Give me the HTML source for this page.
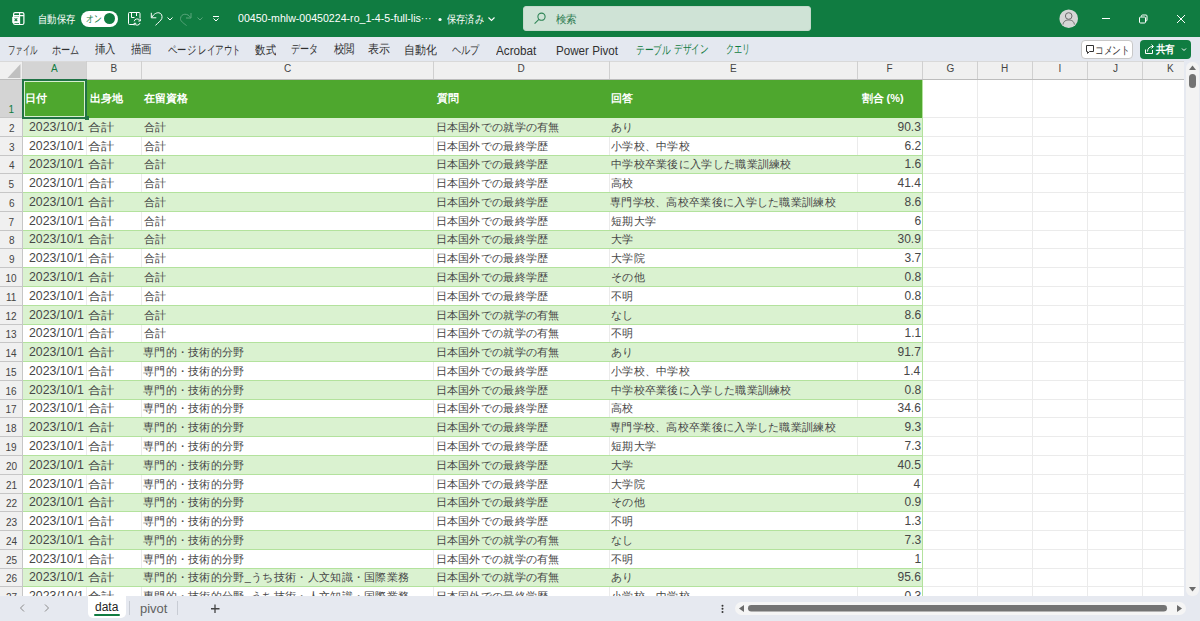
<!DOCTYPE html><html><head><meta charset="utf-8"><style>
*{margin:0;padding:0;box-sizing:border-box}
html,body{width:1200px;height:621px;overflow:hidden;background:#fff;font-family:"Liberation Sans",sans-serif}
div,svg{position:absolute}
.t{white-space:nowrap;line-height:20px;transform-origin:0 0}
</style></head><body>
<div style="left:0px;top:0px;width:1200px;height:37px;background:#107c41;"></div>
<div style="left:523px;top:6px;width:288px;height:25px;background:#cfe3d6;border-radius:3px;border:1px solid #c3d9cb"></div>
<div style="left:81px;top:10.5px;width:37px;height:16px;background:#fff;border-radius:8px"></div>
<div style="left:104px;top:12.8px;width:11.4px;height:11.4px;background:#107c41;border-radius:50%"></div>
<div style="left:0px;top:37px;width:1200px;height:24px;background:#e4e8f0;"></div>
<div style="left:1081px;top:40px;width:52px;height:19px;background:#fff;border:1px solid #c8c8c8;border-radius:4px"></div>
<div style="left:1140px;top:40px;width:51px;height:19px;background:#107c41;border-radius:4px"></div>
<div style="left:0px;top:61px;width:1184px;height:535px;background:#fff;"></div>
<div style="left:0px;top:61px;width:1184px;height:18px;background:#f0f0f0;"></div>
<div style="left:0px;top:79px;width:1184px;height:1px;background:#bdbdbd;"></div>
<div style="left:22px;top:61px;width:65px;height:18px;background:#d4d4d4;"></div>
<div style="left:0px;top:61px;width:1184px;height:1px;background:#d9d9d9;"></div>
<svg style="left:0;top:61px" width="22" height="18"><polygon points="20.5,3 20.5,17 7.5,17" fill="#c0c0c0"/></svg>
<div style="left:86px;top:61px;width:1px;height:18px;background:#d0d0d0;"></div>
<div style="left:141px;top:61px;width:1px;height:18px;background:#d0d0d0;"></div>
<div style="left:433px;top:61px;width:1px;height:18px;background:#d0d0d0;"></div>
<div style="left:609px;top:61px;width:1px;height:18px;background:#d0d0d0;"></div>
<div style="left:857px;top:61px;width:1px;height:18px;background:#d0d0d0;"></div>
<div style="left:922px;top:61px;width:1px;height:18px;background:#d0d0d0;"></div>
<div style="left:977px;top:61px;width:1px;height:18px;background:#d0d0d0;"></div>
<div style="left:1032px;top:61px;width:1px;height:18px;background:#d0d0d0;"></div>
<div style="left:1087px;top:61px;width:1px;height:18px;background:#d0d0d0;"></div>
<div style="left:1142px;top:61px;width:1px;height:18px;background:#d0d0d0;"></div>
<div style="left:22px;top:61px;width:1px;height:18px;background:#d0d0d0;"></div>
<div style="left:0px;top:80px;width:22px;height:516px;background:#f0f0f0;"></div>
<div style="left:22px;top:80px;width:1px;height:516px;background:#c6c6c6;"></div>
<div style="left:0px;top:80px;width:22px;height:37px;background:#d4d4d4;"></div>
<div style="left:0px;top:117px;width:22px;height:1px;background:#c6c6c6;"></div>
<div style="left:0px;top:136px;width:22px;height:1px;background:#c6c6c6;"></div>
<div style="left:0px;top:155px;width:22px;height:1px;background:#c6c6c6;"></div>
<div style="left:0px;top:173px;width:22px;height:1px;background:#c6c6c6;"></div>
<div style="left:0px;top:192px;width:22px;height:1px;background:#c6c6c6;"></div>
<div style="left:0px;top:211px;width:22px;height:1px;background:#c6c6c6;"></div>
<div style="left:0px;top:230px;width:22px;height:1px;background:#c6c6c6;"></div>
<div style="left:0px;top:248px;width:22px;height:1px;background:#c6c6c6;"></div>
<div style="left:0px;top:267px;width:22px;height:1px;background:#c6c6c6;"></div>
<div style="left:0px;top:286px;width:22px;height:1px;background:#c6c6c6;"></div>
<div style="left:0px;top:305px;width:22px;height:1px;background:#c6c6c6;"></div>
<div style="left:0px;top:324px;width:22px;height:1px;background:#c6c6c6;"></div>
<div style="left:0px;top:342px;width:22px;height:1px;background:#c6c6c6;"></div>
<div style="left:0px;top:361px;width:22px;height:1px;background:#c6c6c6;"></div>
<div style="left:0px;top:380px;width:22px;height:1px;background:#c6c6c6;"></div>
<div style="left:0px;top:399px;width:22px;height:1px;background:#c6c6c6;"></div>
<div style="left:0px;top:417px;width:22px;height:1px;background:#c6c6c6;"></div>
<div style="left:0px;top:436px;width:22px;height:1px;background:#c6c6c6;"></div>
<div style="left:0px;top:455px;width:22px;height:1px;background:#c6c6c6;"></div>
<div style="left:0px;top:474px;width:22px;height:1px;background:#c6c6c6;"></div>
<div style="left:0px;top:493px;width:22px;height:1px;background:#c6c6c6;"></div>
<div style="left:0px;top:511px;width:22px;height:1px;background:#c6c6c6;"></div>
<div style="left:0px;top:530px;width:22px;height:1px;background:#c6c6c6;"></div>
<div style="left:0px;top:549px;width:22px;height:1px;background:#c6c6c6;"></div>
<div style="left:0px;top:568px;width:22px;height:1px;background:#c6c6c6;"></div>
<div style="left:0px;top:586px;width:22px;height:1px;background:#c6c6c6;"></div>
<div style="left:0px;top:605px;width:22px;height:1px;background:#c6c6c6;"></div>
<div style="left:0px;top:624px;width:22px;height:1px;background:#c6c6c6;"></div>
<div style="left:923px;top:117px;width:261px;height:1px;background:#ebebeb;"></div>
<div style="left:923px;top:136px;width:261px;height:1px;background:#ebebeb;"></div>
<div style="left:923px;top:155px;width:261px;height:1px;background:#ebebeb;"></div>
<div style="left:923px;top:173px;width:261px;height:1px;background:#ebebeb;"></div>
<div style="left:923px;top:192px;width:261px;height:1px;background:#ebebeb;"></div>
<div style="left:923px;top:211px;width:261px;height:1px;background:#ebebeb;"></div>
<div style="left:923px;top:230px;width:261px;height:1px;background:#ebebeb;"></div>
<div style="left:923px;top:248px;width:261px;height:1px;background:#ebebeb;"></div>
<div style="left:923px;top:267px;width:261px;height:1px;background:#ebebeb;"></div>
<div style="left:923px;top:286px;width:261px;height:1px;background:#ebebeb;"></div>
<div style="left:923px;top:305px;width:261px;height:1px;background:#ebebeb;"></div>
<div style="left:923px;top:324px;width:261px;height:1px;background:#ebebeb;"></div>
<div style="left:923px;top:342px;width:261px;height:1px;background:#ebebeb;"></div>
<div style="left:923px;top:361px;width:261px;height:1px;background:#ebebeb;"></div>
<div style="left:923px;top:380px;width:261px;height:1px;background:#ebebeb;"></div>
<div style="left:923px;top:399px;width:261px;height:1px;background:#ebebeb;"></div>
<div style="left:923px;top:417px;width:261px;height:1px;background:#ebebeb;"></div>
<div style="left:923px;top:436px;width:261px;height:1px;background:#ebebeb;"></div>
<div style="left:923px;top:455px;width:261px;height:1px;background:#ebebeb;"></div>
<div style="left:923px;top:474px;width:261px;height:1px;background:#ebebeb;"></div>
<div style="left:923px;top:493px;width:261px;height:1px;background:#ebebeb;"></div>
<div style="left:923px;top:511px;width:261px;height:1px;background:#ebebeb;"></div>
<div style="left:923px;top:530px;width:261px;height:1px;background:#ebebeb;"></div>
<div style="left:923px;top:549px;width:261px;height:1px;background:#ebebeb;"></div>
<div style="left:923px;top:568px;width:261px;height:1px;background:#ebebeb;"></div>
<div style="left:923px;top:586px;width:261px;height:1px;background:#ebebeb;"></div>
<div style="left:923px;top:605px;width:261px;height:1px;background:#ebebeb;"></div>
<div style="left:923px;top:624px;width:261px;height:1px;background:#ebebeb;"></div>
<div style="left:922px;top:80px;width:1px;height:516px;background:#ebebeb;"></div>
<div style="left:977px;top:80px;width:1px;height:516px;background:#ebebeb;"></div>
<div style="left:1032px;top:80px;width:1px;height:516px;background:#ebebeb;"></div>
<div style="left:1087px;top:80px;width:1px;height:516px;background:#ebebeb;"></div>
<div style="left:1142px;top:80px;width:1px;height:516px;background:#ebebeb;"></div>
<div style="left:23px;top:80px;width:899px;height:38px;background:#4ea72e;"></div>
<div style="left:23px;top:118px;width:899px;height:18px;background:#daf2d0;"></div>
<div style="left:23px;top:136px;width:899px;height:1px;background:#b3e29d;"></div>
<div style="left:86px;top:137px;width:1px;height:18px;background:#ebebeb;"></div>
<div style="left:141px;top:137px;width:1px;height:18px;background:#ebebeb;"></div>
<div style="left:433px;top:137px;width:1px;height:18px;background:#ebebeb;"></div>
<div style="left:609px;top:137px;width:1px;height:18px;background:#ebebeb;"></div>
<div style="left:857px;top:137px;width:1px;height:18px;background:#ebebeb;"></div>
<div style="left:23px;top:155px;width:899px;height:1px;background:#b3e29d;"></div>
<div style="left:23px;top:156px;width:899px;height:17px;background:#daf2d0;"></div>
<div style="left:23px;top:173px;width:899px;height:1px;background:#b3e29d;"></div>
<div style="left:86px;top:174px;width:1px;height:18px;background:#ebebeb;"></div>
<div style="left:141px;top:174px;width:1px;height:18px;background:#ebebeb;"></div>
<div style="left:433px;top:174px;width:1px;height:18px;background:#ebebeb;"></div>
<div style="left:609px;top:174px;width:1px;height:18px;background:#ebebeb;"></div>
<div style="left:857px;top:174px;width:1px;height:18px;background:#ebebeb;"></div>
<div style="left:23px;top:192px;width:899px;height:1px;background:#b3e29d;"></div>
<div style="left:23px;top:193px;width:899px;height:18px;background:#daf2d0;"></div>
<div style="left:23px;top:211px;width:899px;height:1px;background:#b3e29d;"></div>
<div style="left:86px;top:212px;width:1px;height:18px;background:#ebebeb;"></div>
<div style="left:141px;top:212px;width:1px;height:18px;background:#ebebeb;"></div>
<div style="left:433px;top:212px;width:1px;height:18px;background:#ebebeb;"></div>
<div style="left:609px;top:212px;width:1px;height:18px;background:#ebebeb;"></div>
<div style="left:857px;top:212px;width:1px;height:18px;background:#ebebeb;"></div>
<div style="left:23px;top:230px;width:899px;height:1px;background:#b3e29d;"></div>
<div style="left:23px;top:231px;width:899px;height:17px;background:#daf2d0;"></div>
<div style="left:23px;top:248px;width:899px;height:1px;background:#b3e29d;"></div>
<div style="left:86px;top:249px;width:1px;height:18px;background:#ebebeb;"></div>
<div style="left:141px;top:249px;width:1px;height:18px;background:#ebebeb;"></div>
<div style="left:433px;top:249px;width:1px;height:18px;background:#ebebeb;"></div>
<div style="left:609px;top:249px;width:1px;height:18px;background:#ebebeb;"></div>
<div style="left:857px;top:249px;width:1px;height:18px;background:#ebebeb;"></div>
<div style="left:23px;top:267px;width:899px;height:1px;background:#b3e29d;"></div>
<div style="left:23px;top:268px;width:899px;height:18px;background:#daf2d0;"></div>
<div style="left:23px;top:286px;width:899px;height:1px;background:#b3e29d;"></div>
<div style="left:86px;top:287px;width:1px;height:18px;background:#ebebeb;"></div>
<div style="left:141px;top:287px;width:1px;height:18px;background:#ebebeb;"></div>
<div style="left:433px;top:287px;width:1px;height:18px;background:#ebebeb;"></div>
<div style="left:609px;top:287px;width:1px;height:18px;background:#ebebeb;"></div>
<div style="left:857px;top:287px;width:1px;height:18px;background:#ebebeb;"></div>
<div style="left:23px;top:305px;width:899px;height:1px;background:#b3e29d;"></div>
<div style="left:23px;top:306px;width:899px;height:18px;background:#daf2d0;"></div>
<div style="left:23px;top:324px;width:899px;height:1px;background:#b3e29d;"></div>
<div style="left:86px;top:325px;width:1px;height:17px;background:#ebebeb;"></div>
<div style="left:141px;top:325px;width:1px;height:17px;background:#ebebeb;"></div>
<div style="left:433px;top:325px;width:1px;height:17px;background:#ebebeb;"></div>
<div style="left:609px;top:325px;width:1px;height:17px;background:#ebebeb;"></div>
<div style="left:857px;top:325px;width:1px;height:17px;background:#ebebeb;"></div>
<div style="left:23px;top:342px;width:899px;height:1px;background:#b3e29d;"></div>
<div style="left:23px;top:343px;width:899px;height:18px;background:#daf2d0;"></div>
<div style="left:23px;top:361px;width:899px;height:1px;background:#b3e29d;"></div>
<div style="left:86px;top:362px;width:1px;height:18px;background:#ebebeb;"></div>
<div style="left:141px;top:362px;width:1px;height:18px;background:#ebebeb;"></div>
<div style="left:433px;top:362px;width:1px;height:18px;background:#ebebeb;"></div>
<div style="left:609px;top:362px;width:1px;height:18px;background:#ebebeb;"></div>
<div style="left:857px;top:362px;width:1px;height:18px;background:#ebebeb;"></div>
<div style="left:23px;top:380px;width:899px;height:1px;background:#b3e29d;"></div>
<div style="left:23px;top:381px;width:899px;height:18px;background:#daf2d0;"></div>
<div style="left:23px;top:399px;width:899px;height:1px;background:#b3e29d;"></div>
<div style="left:86px;top:400px;width:1px;height:17px;background:#ebebeb;"></div>
<div style="left:141px;top:400px;width:1px;height:17px;background:#ebebeb;"></div>
<div style="left:433px;top:400px;width:1px;height:17px;background:#ebebeb;"></div>
<div style="left:609px;top:400px;width:1px;height:17px;background:#ebebeb;"></div>
<div style="left:857px;top:400px;width:1px;height:17px;background:#ebebeb;"></div>
<div style="left:23px;top:417px;width:899px;height:1px;background:#b3e29d;"></div>
<div style="left:23px;top:418px;width:899px;height:18px;background:#daf2d0;"></div>
<div style="left:23px;top:436px;width:899px;height:1px;background:#b3e29d;"></div>
<div style="left:86px;top:437px;width:1px;height:18px;background:#ebebeb;"></div>
<div style="left:141px;top:437px;width:1px;height:18px;background:#ebebeb;"></div>
<div style="left:433px;top:437px;width:1px;height:18px;background:#ebebeb;"></div>
<div style="left:609px;top:437px;width:1px;height:18px;background:#ebebeb;"></div>
<div style="left:857px;top:437px;width:1px;height:18px;background:#ebebeb;"></div>
<div style="left:23px;top:455px;width:899px;height:1px;background:#b3e29d;"></div>
<div style="left:23px;top:456px;width:899px;height:18px;background:#daf2d0;"></div>
<div style="left:23px;top:474px;width:899px;height:1px;background:#b3e29d;"></div>
<div style="left:86px;top:475px;width:1px;height:18px;background:#ebebeb;"></div>
<div style="left:141px;top:475px;width:1px;height:18px;background:#ebebeb;"></div>
<div style="left:433px;top:475px;width:1px;height:18px;background:#ebebeb;"></div>
<div style="left:609px;top:475px;width:1px;height:18px;background:#ebebeb;"></div>
<div style="left:857px;top:475px;width:1px;height:18px;background:#ebebeb;"></div>
<div style="left:23px;top:493px;width:899px;height:1px;background:#b3e29d;"></div>
<div style="left:23px;top:494px;width:899px;height:17px;background:#daf2d0;"></div>
<div style="left:23px;top:511px;width:899px;height:1px;background:#b3e29d;"></div>
<div style="left:86px;top:512px;width:1px;height:18px;background:#ebebeb;"></div>
<div style="left:141px;top:512px;width:1px;height:18px;background:#ebebeb;"></div>
<div style="left:433px;top:512px;width:1px;height:18px;background:#ebebeb;"></div>
<div style="left:609px;top:512px;width:1px;height:18px;background:#ebebeb;"></div>
<div style="left:857px;top:512px;width:1px;height:18px;background:#ebebeb;"></div>
<div style="left:23px;top:530px;width:899px;height:1px;background:#b3e29d;"></div>
<div style="left:23px;top:531px;width:899px;height:18px;background:#daf2d0;"></div>
<div style="left:23px;top:549px;width:899px;height:1px;background:#b3e29d;"></div>
<div style="left:86px;top:550px;width:1px;height:18px;background:#ebebeb;"></div>
<div style="left:141px;top:550px;width:1px;height:18px;background:#ebebeb;"></div>
<div style="left:433px;top:550px;width:1px;height:18px;background:#ebebeb;"></div>
<div style="left:609px;top:550px;width:1px;height:18px;background:#ebebeb;"></div>
<div style="left:857px;top:550px;width:1px;height:18px;background:#ebebeb;"></div>
<div style="left:23px;top:568px;width:899px;height:1px;background:#b3e29d;"></div>
<div style="left:23px;top:569px;width:899px;height:17px;background:#daf2d0;"></div>
<div style="left:23px;top:586px;width:899px;height:1px;background:#b3e29d;"></div>
<div style="left:86px;top:587px;width:1px;height:18px;background:#ebebeb;"></div>
<div style="left:141px;top:587px;width:1px;height:18px;background:#ebebeb;"></div>
<div style="left:433px;top:587px;width:1px;height:18px;background:#ebebeb;"></div>
<div style="left:609px;top:587px;width:1px;height:18px;background:#ebebeb;"></div>
<div style="left:857px;top:587px;width:1px;height:18px;background:#ebebeb;"></div>
<div style="left:23px;top:605px;width:899px;height:1px;background:#b3e29d;"></div>
<div style="left:922px;top:80px;width:1px;height:516px;background:#b3e29d;"></div>
<div style="left:22px;top:79px;width:65px;height:40px;background:transparent;border:2px solid #217346"></div>
<div style="left:24px;top:81px;width:61px;height:36px;background:transparent;border:1px solid #d8efcf"></div>
<div style="left:85px;top:116px;width:4px;height:4px;background:#217346;"></div>
<svg style="left:0;top:0" width="240" height="37" fill="none" stroke="#fff" stroke-width="1"><rect x="13.6" y="12.6" width="10.3" height="11.9" rx="1.5" stroke-width="1.2"/><path d="M13.6,15.6 H23.9 M19.6,12.6 V24.5" stroke-width="1.1"/><rect x="12.2" y="16.4" width="7.4" height="6.8" rx="1.2" fill="#fff" stroke="none"/><path d="M14.6,18.3 L17.3,21.2 M17.3,18.3 L14.6,21.2" stroke="#107c41" stroke-width="1.1"/><path d="M134,24.5 H129.5 A1,1 0 0 1 128.5,23.5 V13.5 A1,1 0 0 1 129.5,12.5 H139 A1,1 0 0 1 140,13.5 V18.5"/><path d="M131.5,12.5 V17.5 H134.5 M136.5,12.5 V16"/><path d="M134.2,21.3 A3,2.6 0 0 1 140,20.6 M140.3,19 V21 H138.3 M140,23 A3,2.6 0 0 1 134.3,23.6 M134.2,25.3 V23.3 H136.2"/><path d="M151.3,12.8 V17.8 H156.3 M151.8,17.3 C154,13.5 157,12.5 159,12.8 C161.5,13.3 162.6,16 161.8,18.5 C161,20.5 158,23 155.5,25.3"/><path d="M167.5,17.5 L170,20 L172.5,17.5"/><g stroke="#5aa57c"><path d="M191,13 V18 H186 M190.5,17.5 C188,13 181,13 180.5,18.5 C180,21 184,23.5 186.5,25.5"/><path d="M197.5,17.5 L200,20 L202.5,17.5"/></g><path d="M213,16.5 H219 M213.5,18.5 L216,21 L218.5,18.5"/></svg>
<svg style="left:430px;top:0" width="80" height="37"><circle cx="10" cy="19.5" r="1.6" fill="#fff"/><path d="M58.5,17.5 L61.5,20.5 L64.5,17.5" stroke="#fff" stroke-width="1.1" fill="none"/></svg>
<svg style="left:530px;top:8px" width="20" height="20" fill="none" stroke="#2f8556" stroke-width="1.1"><circle cx="11.5" cy="8.7" r="3.6"/><path d="M8.9,11.3 L4.6,15.6"/></svg>
<svg style="left:1040px;top:0" width="160" height="37" fill="none"><circle cx="28.7" cy="18.7" r="9.3" fill="#d6d6d6"/><circle cx="28.7" cy="16" r="3.3" stroke="#6b6b6b" stroke-width="1"/><path d="M23,24.5 C23.5,21 26,20 28.7,20 C31.4,20 33.9,21 34.4,24.5" stroke="#6b6b6b" stroke-width="1"/><path d="M62,18.5 H70" stroke="#fff" stroke-width="1"/><rect x="99.5" y="17" width="6" height="6" rx="1" stroke="#fff"/><path d="M101.5,16.5 V16 A1,1 0 0 1 102.5,15 H106 A1,1 0 0 1 107,16 V20 A1,1 0 0 1 106,21" stroke="#fff"/><path d="M137,15 L145,23 M145,15 L137,23" stroke="#fff" stroke-width="1"/></svg>
<svg style="left:1081px;top:40px" width="110" height="19" fill="none"><path d="M5.5,5.5 H12.5 V11.5 H8.5 L6.5,13.5 V11.5 H5.5 Z" stroke="#333" stroke-width="1"/><path d="M64.5,9.5 V13.5 H71.5 V10 M66.5,11.5 C66.5,8 69,6.5 72,6.5 M70.5,4.5 L72.5,6.5 L70.5,8.5" stroke="#fff" stroke-width="1"/><path d="M101,8.5 L103,10.5 L105,8.5" stroke="#fff" stroke-width="1"/></svg>
<div class="t" style="left:37.65px;top:9.00px;font-size:11px;color:#fff;transform:scaleX(0.8488)">自動保存</div>
<div class="t" style="left:85.52px;top:9.00px;font-size:10px;color:#107c41;transform:scaleX(0.7778)">オン</div>
<div class="t" style="left:238.00px;top:8.00px;font-size:11px;color:#fff;transform:scaleX(0.9648)">00450-mhlw-00450224-ro_1-4-5-full-lis···</div>
<div class="t" style="left:447.00px;top:9.00px;font-size:11px;color:#fff;transform:scaleX(0.8372)">保存済み</div>
<div class="t" style="left:556.00px;top:8.50px;font-size:11px;color:#2a7a4e;transform:scaleX(0.9545)">検索</div>
<div class="t" style="left:8.38px;top:39.50px;font-size:12px;color:#303030;transform:scaleX(0.6170)">ファイル</div>
<div class="t" style="left:52.24px;top:39.50px;font-size:12px;color:#303030;transform:scaleX(0.7647)">ホーム</div>
<div class="t" style="left:95.00px;top:38.50px;font-size:12px;color:#303030;transform:scaleX(0.8696)">挿入</div>
<div class="t" style="left:131.00px;top:38.50px;font-size:12px;color:#303030;transform:scaleX(0.8696)">描画</div>
<div class="t" style="left:167.82px;top:39.50px;font-size:12px;color:#303030;transform:scaleX(0.7765)">ページ</div>
<div class="t" style="left:197.58px;top:39.50px;font-size:12px;color:#303030;transform:scaleX(0.7091)">レイアウト</div>
<div class="t" style="left:255.00px;top:39.50px;font-size:12px;color:#303030;transform:scaleX(0.8750)">数式</div>
<div class="t" style="left:291.24px;top:38.50px;font-size:12px;color:#303030;transform:scaleX(0.7576)">データ</div>
<div class="t" style="left:334.00px;top:38.50px;font-size:12px;color:#303030;transform:scaleX(0.8696)">校閲</div>
<div class="t" style="left:368.09px;top:38.50px;font-size:12px;color:#303030;transform:scaleX(0.9130)">表示</div>
<div class="t" style="left:404.18px;top:39.50px;font-size:12px;color:#303030;transform:scaleX(0.9118)">自動化</div>
<div class="t" style="left:452.24px;top:39.50px;font-size:12px;color:#303030;transform:scaleX(0.7647)">ヘルプ</div>
<div class="t" style="left:496.00px;top:41.00px;font-size:12px;color:#303030;transform:scaleX(0.9756)">Acrobat</div>
<div class="t" style="left:556.03px;top:41.00px;font-size:12px;color:#303030;transform:scaleX(0.9683)">Power Pivot</div>
<div class="t" style="left:636.28px;top:39.50px;font-size:12px;color:#107c41;transform:scaleX(0.7234)">テーブル</div>
<div class="t" style="left:674.28px;top:38.50px;font-size:12px;color:#107c41;transform:scaleX(0.7174)">デザイン</div>
<div class="t" style="left:725.65px;top:38.50px;font-size:12px;color:#107c41;transform:scaleX(0.6774)">クエリ</div>
<div class="t" style="left:1095.41px;top:39.50px;font-size:11px;color:#333;transform:scaleX(0.7949)">コメント</div>
<div class="t" style="left:1156.00px;top:39.00px;font-size:11px;color:#fff;font-weight:bold;transform:scaleX(0.8636)">共有</div>
<div class="t" style="left:51.00px;top:59.00px;font-size:10px;color:#107c41">A</div>
<div class="t" style="left:110.50px;top:59.00px;font-size:10px;color:#444">B</div>
<div class="t" style="left:284.00px;top:59.00px;font-size:10px;color:#444">C</div>
<div class="t" style="left:517.50px;top:59.00px;font-size:10px;color:#444">D</div>
<div class="t" style="left:730.00px;top:59.00px;font-size:10px;color:#444">E</div>
<div class="t" style="left:886.50px;top:59.00px;font-size:10px;color:#444">F</div>
<div class="t" style="left:946.50px;top:59.00px;font-size:10px;color:#444">G</div>
<div class="t" style="left:1001.00px;top:59.00px;font-size:10px;color:#444">H</div>
<div class="t" style="left:1058.50px;top:59.00px;font-size:10px;color:#444">I</div>
<div class="t" style="left:1113.00px;top:59.00px;font-size:10px;color:#444">J</div>
<div class="t" style="left:1167.00px;top:59.00px;font-size:10px;color:#444">K</div>
<div class="t" style="left:8.50px;top:100.00px;font-size:10px;color:#107c41">1</div>
<div class="t" style="left:9.00px;top:119.00px;font-size:10px;color:#444">2</div>
<div class="t" style="left:9.00px;top:138.00px;font-size:10px;color:#444">3</div>
<div class="t" style="left:9.00px;top:156.00px;font-size:10px;color:#444">4</div>
<div class="t" style="left:8.50px;top:175.00px;font-size:10px;color:#444">5</div>
<div class="t" style="left:9.00px;top:194.00px;font-size:10px;color:#444">6</div>
<div class="t" style="left:8.50px;top:213.00px;font-size:10px;color:#444">7</div>
<div class="t" style="left:9.00px;top:231.00px;font-size:10px;color:#444">8</div>
<div class="t" style="left:9.00px;top:250.00px;font-size:10px;color:#444">9</div>
<div class="t" style="left:5.50px;top:269.00px;font-size:10px;color:#444">10</div>
<div class="t" style="left:6.00px;top:288.00px;font-size:10px;color:#444">11</div>
<div class="t" style="left:5.50px;top:307.00px;font-size:10px;color:#444">12</div>
<div class="t" style="left:5.50px;top:325.00px;font-size:10px;color:#444">13</div>
<div class="t" style="left:5.50px;top:344.00px;font-size:10px;color:#444">14</div>
<div class="t" style="left:5.50px;top:363.00px;font-size:10px;color:#444">15</div>
<div class="t" style="left:5.50px;top:382.00px;font-size:10px;color:#444">16</div>
<div class="t" style="left:5.50px;top:400.00px;font-size:10px;color:#444">17</div>
<div class="t" style="left:5.50px;top:419.00px;font-size:10px;color:#444">18</div>
<div class="t" style="left:5.50px;top:438.00px;font-size:10px;color:#444">19</div>
<div class="t" style="left:6.00px;top:457.00px;font-size:10px;color:#444">20</div>
<div class="t" style="left:6.00px;top:476.00px;font-size:10px;color:#444">21</div>
<div class="t" style="left:6.00px;top:494.00px;font-size:10px;color:#444">22</div>
<div class="t" style="left:6.00px;top:513.00px;font-size:10px;color:#444">23</div>
<div class="t" style="left:6.00px;top:532.00px;font-size:10px;color:#444">24</div>
<div class="t" style="left:6.00px;top:551.00px;font-size:10px;color:#444">25</div>
<div class="t" style="left:6.00px;top:569.00px;font-size:10px;color:#444">26</div>
<div class="t" style="left:6.00px;top:588.00px;font-size:10px;color:#444">27</div>
<div class="t" style="left:6.00px;top:607.00px;font-size:10px;color:#444">28</div>
<div class="t" style="left:25.00px;top:87.50px;font-size:11px;color:#fff;font-weight:bold">日付</div>
<div class="t" style="left:90.00px;top:87.50px;font-size:11px;color:#fff;font-weight:bold">出身地</div>
<div class="t" style="left:144.00px;top:87.50px;font-size:11px;color:#fff;font-weight:bold">在留資格</div>
<div class="t" style="left:437.00px;top:87.50px;font-size:11px;color:#fff;font-weight:bold">質問</div>
<div class="t" style="left:611.00px;top:87.50px;font-size:11px;color:#fff;font-weight:bold">回答</div>
<div class="t" style="left:861.50px;top:87.50px;font-size:11px;color:#fff;font-weight:bold">割合 (%)</div>
<div class="t" style="left:28.77px;top:117.00px;font-size:12px;color:#474747;transform:scaleX(1.0269)">2023/10/1</div>
<div class="t" style="left:87.81px;top:117.00px;font-size:11px;color:#474747;transform:scaleX(1.1944)">合計</div>
<div class="t" style="left:144.00px;top:117.00px;font-size:11px;color:#474747;letter-spacing:0.3px">合計</div>
<div class="t" style="left:435.50px;top:117.00px;font-size:11px;color:#474747;letter-spacing:0.3px">日本国外での就学の有無</div>
<div class="t" style="left:611.00px;top:117.00px;font-size:11px;color:#474747;letter-spacing:0.3px">あり</div>
<div class="t" style="left:897.50px;top:117.00px;font-size:12px;color:#474747">90.3</div>
<div class="t" style="left:28.77px;top:136.00px;font-size:12px;color:#474747;transform:scaleX(1.0269)">2023/10/1</div>
<div class="t" style="left:87.81px;top:136.00px;font-size:11px;color:#474747;transform:scaleX(1.1944)">合計</div>
<div class="t" style="left:144.00px;top:136.00px;font-size:11px;color:#474747;letter-spacing:0.3px">合計</div>
<div class="t" style="left:435.50px;top:136.00px;font-size:11px;color:#474747;letter-spacing:0.3px">日本国外での最終学歴</div>
<div class="t" style="left:611.00px;top:136.00px;font-size:11px;color:#474747;letter-spacing:0.3px">小学校、中学校</div>
<div class="t" style="left:904.50px;top:136.00px;font-size:12px;color:#474747">6.2</div>
<div class="t" style="left:28.77px;top:154.00px;font-size:12px;color:#474747;transform:scaleX(1.0269)">2023/10/1</div>
<div class="t" style="left:87.81px;top:154.00px;font-size:11px;color:#474747;transform:scaleX(1.1944)">合計</div>
<div class="t" style="left:144.00px;top:154.00px;font-size:11px;color:#474747;letter-spacing:0.3px">合計</div>
<div class="t" style="left:435.50px;top:154.00px;font-size:11px;color:#474747;letter-spacing:0.3px">日本国外での最終学歴</div>
<div class="t" style="left:611.00px;top:154.00px;font-size:11px;color:#474747;letter-spacing:0.3px">中学校卒業後に入学した職業訓練校</div>
<div class="t" style="left:904.50px;top:154.00px;font-size:12px;color:#474747">1.6</div>
<div class="t" style="left:28.77px;top:173.00px;font-size:12px;color:#474747;transform:scaleX(1.0269)">2023/10/1</div>
<div class="t" style="left:87.81px;top:173.00px;font-size:11px;color:#474747;transform:scaleX(1.1944)">合計</div>
<div class="t" style="left:144.00px;top:173.00px;font-size:11px;color:#474747;letter-spacing:0.3px">合計</div>
<div class="t" style="left:435.50px;top:173.00px;font-size:11px;color:#474747;letter-spacing:0.3px">日本国外での最終学歴</div>
<div class="t" style="left:611.00px;top:173.00px;font-size:11px;color:#474747;letter-spacing:0.3px">高校</div>
<div class="t" style="left:897.50px;top:173.00px;font-size:12px;color:#474747">41.4</div>
<div class="t" style="left:28.77px;top:192.00px;font-size:12px;color:#474747;transform:scaleX(1.0269)">2023/10/1</div>
<div class="t" style="left:87.81px;top:192.00px;font-size:11px;color:#474747;transform:scaleX(1.1944)">合計</div>
<div class="t" style="left:144.00px;top:192.00px;font-size:11px;color:#474747;letter-spacing:0.3px">合計</div>
<div class="t" style="left:435.50px;top:192.00px;font-size:11px;color:#474747;letter-spacing:0.3px">日本国外での最終学歴</div>
<div class="t" style="left:610.00px;top:192.00px;font-size:11px;color:#474747;letter-spacing:0.3px">専門学校、高校卒業後に入学した職業訓練校</div>
<div class="t" style="left:904.50px;top:192.00px;font-size:12px;color:#474747">8.6</div>
<div class="t" style="left:28.77px;top:211.00px;font-size:12px;color:#474747;transform:scaleX(1.0269)">2023/10/1</div>
<div class="t" style="left:87.81px;top:211.00px;font-size:11px;color:#474747;transform:scaleX(1.1944)">合計</div>
<div class="t" style="left:144.00px;top:211.00px;font-size:11px;color:#474747;letter-spacing:0.3px">合計</div>
<div class="t" style="left:435.50px;top:211.00px;font-size:11px;color:#474747;letter-spacing:0.3px">日本国外での最終学歴</div>
<div class="t" style="left:611.00px;top:211.00px;font-size:11px;color:#474747;letter-spacing:0.3px">短期大学</div>
<div class="t" style="left:914.50px;top:211.00px;font-size:12px;color:#474747">6</div>
<div class="t" style="left:28.77px;top:229.00px;font-size:12px;color:#474747;transform:scaleX(1.0269)">2023/10/1</div>
<div class="t" style="left:87.81px;top:229.00px;font-size:11px;color:#474747;transform:scaleX(1.1944)">合計</div>
<div class="t" style="left:144.00px;top:229.00px;font-size:11px;color:#474747;letter-spacing:0.3px">合計</div>
<div class="t" style="left:435.50px;top:229.00px;font-size:11px;color:#474747;letter-spacing:0.3px">日本国外での最終学歴</div>
<div class="t" style="left:611.00px;top:229.00px;font-size:11px;color:#474747;letter-spacing:0.3px">大学</div>
<div class="t" style="left:897.50px;top:229.00px;font-size:12px;color:#474747">30.9</div>
<div class="t" style="left:28.77px;top:248.00px;font-size:12px;color:#474747;transform:scaleX(1.0269)">2023/10/1</div>
<div class="t" style="left:87.81px;top:248.00px;font-size:11px;color:#474747;transform:scaleX(1.1944)">合計</div>
<div class="t" style="left:144.00px;top:248.00px;font-size:11px;color:#474747;letter-spacing:0.3px">合計</div>
<div class="t" style="left:435.50px;top:248.00px;font-size:11px;color:#474747;letter-spacing:0.3px">日本国外での最終学歴</div>
<div class="t" style="left:611.00px;top:248.00px;font-size:11px;color:#474747;letter-spacing:0.3px">大学院</div>
<div class="t" style="left:904.50px;top:248.00px;font-size:12px;color:#474747">3.7</div>
<div class="t" style="left:28.77px;top:267.00px;font-size:12px;color:#474747;transform:scaleX(1.0269)">2023/10/1</div>
<div class="t" style="left:87.81px;top:267.00px;font-size:11px;color:#474747;transform:scaleX(1.1944)">合計</div>
<div class="t" style="left:144.00px;top:267.00px;font-size:11px;color:#474747;letter-spacing:0.3px">合計</div>
<div class="t" style="left:435.50px;top:267.00px;font-size:11px;color:#474747;letter-spacing:0.3px">日本国外での最終学歴</div>
<div class="t" style="left:611.00px;top:267.00px;font-size:11px;color:#474747;letter-spacing:0.3px">その他</div>
<div class="t" style="left:904.50px;top:267.00px;font-size:12px;color:#474747">0.8</div>
<div class="t" style="left:28.77px;top:286.00px;font-size:12px;color:#474747;transform:scaleX(1.0269)">2023/10/1</div>
<div class="t" style="left:87.81px;top:286.00px;font-size:11px;color:#474747;transform:scaleX(1.1944)">合計</div>
<div class="t" style="left:144.00px;top:286.00px;font-size:11px;color:#474747;letter-spacing:0.3px">合計</div>
<div class="t" style="left:435.50px;top:286.00px;font-size:11px;color:#474747;letter-spacing:0.3px">日本国外での最終学歴</div>
<div class="t" style="left:611.00px;top:286.00px;font-size:11px;color:#474747;letter-spacing:0.3px">不明</div>
<div class="t" style="left:904.50px;top:286.00px;font-size:12px;color:#474747">0.8</div>
<div class="t" style="left:28.77px;top:305.00px;font-size:12px;color:#474747;transform:scaleX(1.0269)">2023/10/1</div>
<div class="t" style="left:87.81px;top:305.00px;font-size:11px;color:#474747;transform:scaleX(1.1944)">合計</div>
<div class="t" style="left:144.00px;top:305.00px;font-size:11px;color:#474747;letter-spacing:0.3px">合計</div>
<div class="t" style="left:435.50px;top:305.00px;font-size:11px;color:#474747;letter-spacing:0.3px">日本国外での就学の有無</div>
<div class="t" style="left:611.00px;top:305.00px;font-size:11px;color:#474747;letter-spacing:0.3px">なし</div>
<div class="t" style="left:904.50px;top:305.00px;font-size:12px;color:#474747">8.6</div>
<div class="t" style="left:28.77px;top:323.00px;font-size:12px;color:#474747;transform:scaleX(1.0269)">2023/10/1</div>
<div class="t" style="left:87.81px;top:323.00px;font-size:11px;color:#474747;transform:scaleX(1.1944)">合計</div>
<div class="t" style="left:144.00px;top:323.00px;font-size:11px;color:#474747;letter-spacing:0.3px">合計</div>
<div class="t" style="left:435.50px;top:323.00px;font-size:11px;color:#474747;letter-spacing:0.3px">日本国外での就学の有無</div>
<div class="t" style="left:611.00px;top:323.00px;font-size:11px;color:#474747;letter-spacing:0.3px">不明</div>
<div class="t" style="left:904.50px;top:323.00px;font-size:12px;color:#474747">1.1</div>
<div class="t" style="left:28.77px;top:342.00px;font-size:12px;color:#474747;transform:scaleX(1.0269)">2023/10/1</div>
<div class="t" style="left:87.81px;top:342.00px;font-size:11px;color:#474747;transform:scaleX(1.1944)">合計</div>
<div class="t" style="left:143.00px;top:342.00px;font-size:11px;color:#474747;letter-spacing:0.3px">専門的・技術的分野</div>
<div class="t" style="left:435.50px;top:342.00px;font-size:11px;color:#474747;letter-spacing:0.3px">日本国外での就学の有無</div>
<div class="t" style="left:611.00px;top:342.00px;font-size:11px;color:#474747;letter-spacing:0.3px">あり</div>
<div class="t" style="left:897.50px;top:342.00px;font-size:12px;color:#474747">91.7</div>
<div class="t" style="left:28.77px;top:361.00px;font-size:12px;color:#474747;transform:scaleX(1.0269)">2023/10/1</div>
<div class="t" style="left:87.81px;top:361.00px;font-size:11px;color:#474747;transform:scaleX(1.1944)">合計</div>
<div class="t" style="left:143.00px;top:361.00px;font-size:11px;color:#474747;letter-spacing:0.3px">専門的・技術的分野</div>
<div class="t" style="left:435.50px;top:361.00px;font-size:11px;color:#474747;letter-spacing:0.3px">日本国外での最終学歴</div>
<div class="t" style="left:611.00px;top:361.00px;font-size:11px;color:#474747;letter-spacing:0.3px">小学校、中学校</div>
<div class="t" style="left:903.50px;top:361.00px;font-size:12px;color:#474747">1.4</div>
<div class="t" style="left:28.77px;top:380.00px;font-size:12px;color:#474747;transform:scaleX(1.0269)">2023/10/1</div>
<div class="t" style="left:87.81px;top:380.00px;font-size:11px;color:#474747;transform:scaleX(1.1944)">合計</div>
<div class="t" style="left:143.00px;top:380.00px;font-size:11px;color:#474747;letter-spacing:0.3px">専門的・技術的分野</div>
<div class="t" style="left:435.50px;top:380.00px;font-size:11px;color:#474747;letter-spacing:0.3px">日本国外での最終学歴</div>
<div class="t" style="left:611.00px;top:380.00px;font-size:11px;color:#474747;letter-spacing:0.3px">中学校卒業後に入学した職業訓練校</div>
<div class="t" style="left:904.50px;top:380.00px;font-size:12px;color:#474747">0.8</div>
<div class="t" style="left:28.77px;top:398.00px;font-size:12px;color:#474747;transform:scaleX(1.0269)">2023/10/1</div>
<div class="t" style="left:87.81px;top:398.00px;font-size:11px;color:#474747;transform:scaleX(1.1944)">合計</div>
<div class="t" style="left:143.00px;top:398.00px;font-size:11px;color:#474747;letter-spacing:0.3px">専門的・技術的分野</div>
<div class="t" style="left:435.50px;top:398.00px;font-size:11px;color:#474747;letter-spacing:0.3px">日本国外での最終学歴</div>
<div class="t" style="left:611.00px;top:398.00px;font-size:11px;color:#474747;letter-spacing:0.3px">高校</div>
<div class="t" style="left:897.50px;top:398.00px;font-size:12px;color:#474747">34.6</div>
<div class="t" style="left:28.77px;top:417.00px;font-size:12px;color:#474747;transform:scaleX(1.0269)">2023/10/1</div>
<div class="t" style="left:87.81px;top:417.00px;font-size:11px;color:#474747;transform:scaleX(1.1944)">合計</div>
<div class="t" style="left:143.00px;top:417.00px;font-size:11px;color:#474747;letter-spacing:0.3px">専門的・技術的分野</div>
<div class="t" style="left:435.50px;top:417.00px;font-size:11px;color:#474747;letter-spacing:0.3px">日本国外での最終学歴</div>
<div class="t" style="left:610.00px;top:417.00px;font-size:11px;color:#474747;letter-spacing:0.3px">専門学校、高校卒業後に入学した職業訓練校</div>
<div class="t" style="left:904.50px;top:417.00px;font-size:12px;color:#474747">9.3</div>
<div class="t" style="left:28.77px;top:436.00px;font-size:12px;color:#474747;transform:scaleX(1.0269)">2023/10/1</div>
<div class="t" style="left:87.81px;top:436.00px;font-size:11px;color:#474747;transform:scaleX(1.1944)">合計</div>
<div class="t" style="left:143.00px;top:436.00px;font-size:11px;color:#474747;letter-spacing:0.3px">専門的・技術的分野</div>
<div class="t" style="left:435.50px;top:436.00px;font-size:11px;color:#474747;letter-spacing:0.3px">日本国外での最終学歴</div>
<div class="t" style="left:611.00px;top:436.00px;font-size:11px;color:#474747;letter-spacing:0.3px">短期大学</div>
<div class="t" style="left:904.50px;top:436.00px;font-size:12px;color:#474747">7.3</div>
<div class="t" style="left:28.77px;top:455.00px;font-size:12px;color:#474747;transform:scaleX(1.0269)">2023/10/1</div>
<div class="t" style="left:87.81px;top:455.00px;font-size:11px;color:#474747;transform:scaleX(1.1944)">合計</div>
<div class="t" style="left:143.00px;top:455.00px;font-size:11px;color:#474747;letter-spacing:0.3px">専門的・技術的分野</div>
<div class="t" style="left:435.50px;top:455.00px;font-size:11px;color:#474747;letter-spacing:0.3px">日本国外での最終学歴</div>
<div class="t" style="left:611.00px;top:455.00px;font-size:11px;color:#474747;letter-spacing:0.3px">大学</div>
<div class="t" style="left:897.50px;top:455.00px;font-size:12px;color:#474747">40.5</div>
<div class="t" style="left:28.77px;top:474.00px;font-size:12px;color:#474747;transform:scaleX(1.0269)">2023/10/1</div>
<div class="t" style="left:87.81px;top:474.00px;font-size:11px;color:#474747;transform:scaleX(1.1944)">合計</div>
<div class="t" style="left:143.00px;top:474.00px;font-size:11px;color:#474747;letter-spacing:0.3px">専門的・技術的分野</div>
<div class="t" style="left:435.50px;top:474.00px;font-size:11px;color:#474747;letter-spacing:0.3px">日本国外での最終学歴</div>
<div class="t" style="left:611.00px;top:474.00px;font-size:11px;color:#474747;letter-spacing:0.3px">大学院</div>
<div class="t" style="left:913.50px;top:474.00px;font-size:12px;color:#474747">4</div>
<div class="t" style="left:28.77px;top:492.00px;font-size:12px;color:#474747;transform:scaleX(1.0269)">2023/10/1</div>
<div class="t" style="left:87.81px;top:492.00px;font-size:11px;color:#474747;transform:scaleX(1.1944)">合計</div>
<div class="t" style="left:143.00px;top:492.00px;font-size:11px;color:#474747;letter-spacing:0.3px">専門的・技術的分野</div>
<div class="t" style="left:435.50px;top:492.00px;font-size:11px;color:#474747;letter-spacing:0.3px">日本国外での最終学歴</div>
<div class="t" style="left:611.00px;top:492.00px;font-size:11px;color:#474747;letter-spacing:0.3px">その他</div>
<div class="t" style="left:904.50px;top:492.00px;font-size:12px;color:#474747">0.9</div>
<div class="t" style="left:28.77px;top:511.00px;font-size:12px;color:#474747;transform:scaleX(1.0269)">2023/10/1</div>
<div class="t" style="left:87.81px;top:511.00px;font-size:11px;color:#474747;transform:scaleX(1.1944)">合計</div>
<div class="t" style="left:143.00px;top:511.00px;font-size:11px;color:#474747;letter-spacing:0.3px">専門的・技術的分野</div>
<div class="t" style="left:435.50px;top:511.00px;font-size:11px;color:#474747;letter-spacing:0.3px">日本国外での最終学歴</div>
<div class="t" style="left:611.00px;top:511.00px;font-size:11px;color:#474747;letter-spacing:0.3px">不明</div>
<div class="t" style="left:904.50px;top:511.00px;font-size:12px;color:#474747">1.3</div>
<div class="t" style="left:28.77px;top:530.00px;font-size:12px;color:#474747;transform:scaleX(1.0269)">2023/10/1</div>
<div class="t" style="left:87.81px;top:530.00px;font-size:11px;color:#474747;transform:scaleX(1.1944)">合計</div>
<div class="t" style="left:143.00px;top:530.00px;font-size:11px;color:#474747;letter-spacing:0.3px">専門的・技術的分野</div>
<div class="t" style="left:435.50px;top:530.00px;font-size:11px;color:#474747;letter-spacing:0.3px">日本国外での就学の有無</div>
<div class="t" style="left:611.00px;top:530.00px;font-size:11px;color:#474747;letter-spacing:0.3px">なし</div>
<div class="t" style="left:904.50px;top:530.00px;font-size:12px;color:#474747">7.3</div>
<div class="t" style="left:28.77px;top:549.00px;font-size:12px;color:#474747;transform:scaleX(1.0269)">2023/10/1</div>
<div class="t" style="left:87.81px;top:549.00px;font-size:11px;color:#474747;transform:scaleX(1.1944)">合計</div>
<div class="t" style="left:143.00px;top:549.00px;font-size:11px;color:#474747;letter-spacing:0.3px">専門的・技術的分野</div>
<div class="t" style="left:435.50px;top:549.00px;font-size:11px;color:#474747;letter-spacing:0.3px">日本国外での就学の有無</div>
<div class="t" style="left:611.00px;top:549.00px;font-size:11px;color:#474747;letter-spacing:0.3px">不明</div>
<div class="t" style="left:914.50px;top:549.00px;font-size:12px;color:#474747">1</div>
<div class="t" style="left:28.77px;top:567.00px;font-size:12px;color:#474747;transform:scaleX(1.0269)">2023/10/1</div>
<div class="t" style="left:87.81px;top:567.00px;font-size:11px;color:#474747;transform:scaleX(1.1944)">合計</div>
<div class="t" style="left:143.00px;top:567.00px;font-size:11px;color:#474747;letter-spacing:0.3px">専門的・技術的分野_うち技術・人文知識・国際業務</div>
<div class="t" style="left:435.50px;top:567.00px;font-size:11px;color:#474747;letter-spacing:0.3px">日本国外での就学の有無</div>
<div class="t" style="left:611.00px;top:567.00px;font-size:11px;color:#474747;letter-spacing:0.3px">あり</div>
<div class="t" style="left:897.50px;top:567.00px;font-size:12px;color:#474747">95.6</div>
<div class="t" style="left:28.77px;top:586.00px;font-size:12px;color:#474747;transform:scaleX(1.0269)">2023/10/1</div>
<div class="t" style="left:87.81px;top:586.00px;font-size:11px;color:#474747;transform:scaleX(1.1944)">合計</div>
<div class="t" style="left:143.00px;top:586.00px;font-size:11px;color:#474747;letter-spacing:0.3px">専門的・技術的分野_うち技術・人文知識・国際業務</div>
<div class="t" style="left:435.50px;top:586.00px;font-size:11px;color:#474747;letter-spacing:0.3px">日本国外での最終学歴</div>
<div class="t" style="left:611.00px;top:586.00px;font-size:11px;color:#474747;letter-spacing:0.3px">小学校、中学校</div>
<div class="t" style="left:904.50px;top:586.00px;font-size:12px;color:#474747">0.3</div>
<div style="left:1184px;top:61px;width:16px;height:536px;background:#e6e9f0;"></div>
<div style="left:1186px;top:62px;width:13px;height:534px;background:#f3f3f3;border-radius:6px 6px 6px 6px"></div>
<svg style="left:1186px;top:62px" width="13" height="534"><polygon points="3,8 10,8 6.5,3.5" fill="#6b6b6b"/><rect x="3" y="12" width="7" height="14" rx="3.5" fill="#737373"/><polygon points="3,525 10,525 6.5,529.5" fill="#6b6b6b"/></svg>
<div style="left:0px;top:596px;width:1200px;height:25px;background:#e6e9f0;"></div>
<div style="left:88px;top:596px;width:38px;height:22px;background:#fff;border-radius:0 0 5px 5px"></div>
<div style="left:94px;top:614px;width:26px;height:2px;background:#107c41;border-radius:1px"></div>
<div style="left:129px;top:601px;width:1px;height:14px;background:#c8ccd4;"></div>
<div style="left:177px;top:601px;width:1px;height:14px;background:#c8ccd4;"></div>
<svg style="left:0;top:596px" width="240" height="25"><path d="M24,8.5 L20.5,12 L24,15.5" stroke="#8a8a8a" stroke-width="1" fill="none"/><path d="M45,8.5 L48.5,12 L45,15.5" stroke="#8a8a8a" stroke-width="1" fill="none"/><path d="M215,8.5 V17 M211,12.75 H219.5" stroke="#444" stroke-width="1.3" fill="none"/></svg>
<svg style="left:718px;top:600px" width="10" height="16"><circle cx="4.5" cy="5.7" r="1" fill="#333"/><circle cx="4.5" cy="8.8" r="1" fill="#333"/><circle cx="4.5" cy="12" r="1" fill="#333"/></svg>
<div style="left:735px;top:602px;width:451px;height:13px;background:#f5f5f5;border-radius:6.5px"></div>
<svg style="left:735px;top:602px" width="451" height="13"><polygon points="4,6.5 9,3 9,10" fill="#6b6b6b"/><rect x="13" y="3" width="419" height="6.5" rx="3.25" fill="#737373"/><polygon points="447,6.5 442,3 442,10" fill="#6b6b6b"/></svg>
<div class="t" style="left:95.00px;top:597.00px;font-size:12px;color:#242424">data</div>
<div class="t" style="left:139.92px;top:598.50px;font-size:12px;color:#616161;transform:scaleX(1.0833)">pivot</div>
</body></html>
